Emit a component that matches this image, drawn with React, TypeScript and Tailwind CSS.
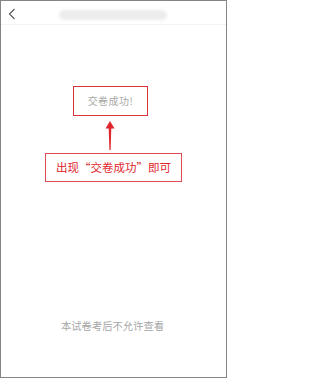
import React from 'react'

const font = { fontFamily: '"Noto Sans CJK SC", "Noto Sans", sans-serif' }

function BackIcon() {
  return (
    <svg width="8" height="12" viewBox="0 0 8 12" className="block">
      <path d="M6.5 1 L1.5 6 L6.5 11" fill="none" stroke="#555" strokeWidth="1.1" />
    </svg>
  )
}

function UpArrow() {
  return (
    <svg width="10" height="29" viewBox="0 0 10 29" className="block">
      <path d="M5 0 L9.5 7.5 L6.3 7.5 L5.6 29 L4.4 29 L3.7 7.5 L0.5 7.5 Z" fill="#e0262c" />
    </svg>
  )
}

export default function App() {
  return (
    <div className="w-[227px] h-[378px] bg-white border border-[#858585] flex flex-col overflow-hidden" style={font}>
      {/* header */}
      <div className="h-[24px] shrink-0 flex items-center border-b border-[#f3f3f3]">
        <div className="ml-[7px] mt-[3px]">
          <BackIcon />
        </div>
        <div className="ml-[43px] mt-[5px] w-[108px] h-[10px] rounded-full bg-[#ececec] blur-[1.5px]" />
      </div>

      {/* body */}
      <div className="flex-1 flex flex-col">
        <div className="ml-[72px] mt-[61px] w-[75px] h-[30px] border-[1.5px] border-[#d9363c] flex items-center justify-center">
          <span className="text-[10px] leading-none text-[#a8a8a8] tracking-[0.5px]">交卷成功!</span>
        </div>
        <div className="ml-[104px] mt-[5px]">
          <UpArrow />
        </div>
        <div className="ml-[44px] mt-[3px] w-[137px] h-[29px] border-[1.5px] border-[#e04a50] flex items-center justify-center">
          <span className="text-[11.5px] leading-none text-[#e0262c]">出现“交卷成功”即可</span>
        </div>
        <div className="mt-[139px] text-center text-[10.3px] leading-none text-[#a6a6a6] pr-[2px]">
          本试卷考后不允许查看
        </div>
      </div>
    </div>
  )
}
